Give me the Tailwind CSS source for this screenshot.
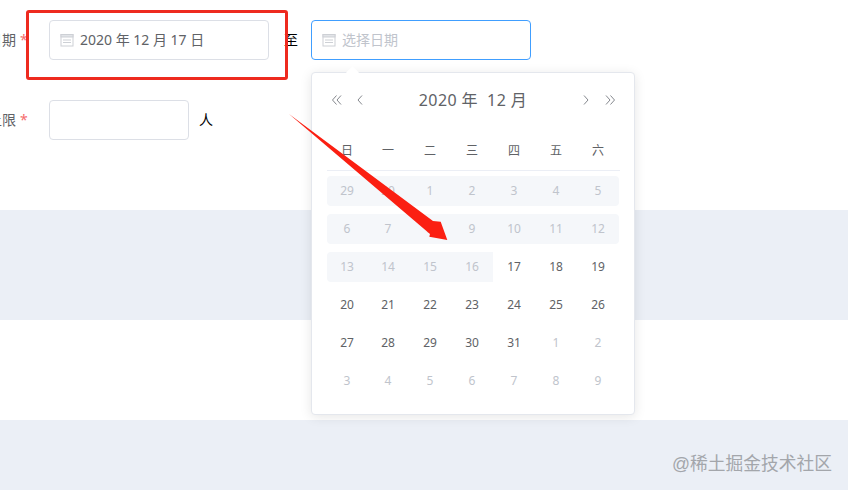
<!DOCTYPE html>
<html lang="zh-CN">
<head>
    <meta charset="UTF-8">
    <title>日期选择</title>
    <script src="https://cdn.jsdelivr.net/npm/@tailwindcss/browser@4"></script>
</head>
<body class="bg-white">
    <div class="relative h-[490px] w-[848px] overflow-hidden font-['Noto_Sans','Noto_Sans_CJK_SC',sans-serif] text-sm text-[#606266]">

        <!-- Form -->
        <div class="h-[210px] pt-5">
            <div class="flex h-10 items-center">
                <div class="flex w-[49px] shrink-0 justify-end gap-[4px] pr-[29px] whitespace-nowrap">日期<span class="w-0 text-[#f56c6c]">*</span></div>
                <div class="flex h-10 w-[220px] items-center rounded border border-[#dcdfe6] pl-[10px]">
                    <svg class="mr-[6px] h-[14px] w-[14px] shrink-0" viewBox="0 0 14 14" fill="none" stroke="#cdd0d5"><rect x="1" y="1.5" width="12" height="11.5"/><rect x="1" y="1.5" width="12" height="2.5" fill="#e2e4e8"/><path d="M3 7h8M3 9.5h8"/></svg>
                    <span>2020 年 12 月 17 日</span>
                </div>
                <span class="ml-[15px] text-black">至</span>
                <div class="ml-[13px] flex h-10 w-[220px] items-center rounded border border-[#409eff] pl-[10px] text-[#c0c4cc]">
                    <svg class="mr-[6px] h-[14px] w-[14px] shrink-0" viewBox="0 0 14 14" fill="none" stroke="#cdd0d5"><rect x="1" y="1.5" width="12" height="11.5"/><rect x="1" y="1.5" width="12" height="2.5" fill="#e2e4e8"/><path d="M3 7h8M3 9.5h8"/></svg>
                    <span>选择日期</span>
                </div>
            </div>
            <div class="mt-10 flex h-10 items-center">
                <div class="flex w-[49px] shrink-0 justify-end gap-[4px] pr-[29px] whitespace-nowrap">人数上限<span class="w-0 text-[#f56c6c]">*</span></div>
                <div class="h-10 w-[140px] rounded border border-[#dcdfe6]"></div>
                <span class="ml-[10px] text-black">人</span>
            </div>
        </div>

        <!-- Bands -->
        <div class="h-[110px] bg-[#ebeff6]"></div>
        <div class="h-[100px] bg-white"></div>
        <div class="flex h-[70px] items-start justify-end bg-[#ebeff6] pr-[16px] pt-[30px]">
            <span class="text-[17.75px] leading-[26px] text-[#a3a6ab]"><span class="font-['Liberation_Sans']">@</span>稀土掘金技术社区</span>
        </div>

        <!-- Date picker popover -->
        <div class="absolute left-[311px] top-[72px] h-[343px] w-[324px] rounded border border-[#e4e7ed] bg-white px-[14px] pt-[12px] shadow-[0_2px_12px_0_rgba(0,0,0,0.1)]">
            <div class="absolute -top-[5px] left-[36px] h-[9px] w-[9px] rotate-45 bg-white"></div>
            <div class="flex h-[30px] items-center justify-between pl-[5px] pr-[4px]">
                <div class="flex items-center gap-[10.5px]">
                    <svg class="h-[12px] w-[12px]" viewBox="0 0 12 12" fill="none" stroke="#85888e"><path d="M5.5 1.5 1.5 6l4 4.5M10 1.5 6 6l4 4.5"/></svg>
                    <svg class="h-[12px] w-[12px]" viewBox="0 0 12 12" fill="none" stroke="#85888e"><path d="M8 1.5 4 6l4 4.5"/></svg>
                </div>
                <div class="text-base tracking-[0.4px] whitespace-pre">2020 年  12 月</div>
                <div class="flex items-center gap-[11.5px]">
                    <svg class="h-[12px] w-[12px]" viewBox="0 0 12 12" fill="none" stroke="#85888e"><path d="m4 1.5 4 4.5-4 4.5"/></svg>
                    <svg class="h-[12px] w-[12px]" viewBox="0 0 12 12" fill="none" stroke="#85888e"><path d="m2 1.5 4 4.5-4 4.5M6.5 1.5l4 4.5-4 4.5"/></svg>
                </div>
            </div>

            <div class="mt-[18px] ml-[1px] grid h-[38px] w-[293px] grid-cols-[40px_repeat(6,42px)] items-center border-b border-[#ebeef5] pb-[2px] text-center text-[12px]">
                <span>日</span><span>一</span><span>二</span><span>三</span><span>四</span><span>五</span><span>六</span>
            </div>

            <div class="mt-[1px] ml-[1px] w-[292px] text-center text-[12px]">
                <div class="flex h-[38px] items-center">
                    <div class="grid h-[30px] w-[292px] grid-cols-[40px_repeat(6,42px)] items-center rounded bg-[#f5f7fa] text-[#c0c4cc]">
                        <span>29</span><span>30</span><span>1</span><span>2</span><span>3</span><span>4</span><span>5</span>
                    </div>
                </div>
                <div class="flex h-[38px] items-center">
                    <div class="grid h-[30px] w-[292px] grid-cols-[40px_repeat(6,42px)] items-center rounded bg-[#f5f7fa] text-[#c0c4cc]">
                        <span>6</span><span>7</span><span>8</span><span>9</span><span>10</span><span>11</span><span>12</span>
                    </div>
                </div>
                <div class="flex h-[38px] items-center">
                    <div class="grid h-[30px] w-[166px] grid-cols-[40px_repeat(3,42px)] items-center rounded-l bg-[#f5f7fa] text-[#c0c4cc]">
                        <span>13</span><span>14</span><span>15</span><span>16</span>
                    </div>
                    <div class="grid w-[126px] grid-cols-3">
                        <span>17</span><span>18</span><span>19</span>
                    </div>
                </div>
                <div class="grid h-[38px] grid-cols-[40px_repeat(6,42px)] items-center">
                    <span>20</span><span>21</span><span>22</span><span>23</span><span>24</span><span>25</span><span>26</span>
                </div>
                <div class="grid h-[38px] grid-cols-[40px_repeat(6,42px)] items-center">
                    <span>27</span><span>28</span><span>29</span><span>30</span><span>31</span><span class="text-[#c0c4cc]">1</span><span class="text-[#c0c4cc]">2</span>
                </div>
                <div class="grid h-[38px] grid-cols-[40px_repeat(6,42px)] items-center text-[#c0c4cc]">
                    <span>3</span><span>4</span><span>5</span><span>6</span><span>7</span><span>8</span><span>9</span>
                </div>
            </div>
        </div>

        <!-- Red annotations -->
        <div class="absolute left-[26px] top-[10px] h-[70px] w-[262px] rounded-[3px] border-[3px] border-[#ee2a1f]"></div>
        <svg class="absolute left-0 top-0" width="848" height="490" fill="#fb1f12"><polygon points="289,114 433,221 440.7,221.7 447.3,240 429.3,236.7 430,234"/></svg>
    </div>
</body>
</html>
